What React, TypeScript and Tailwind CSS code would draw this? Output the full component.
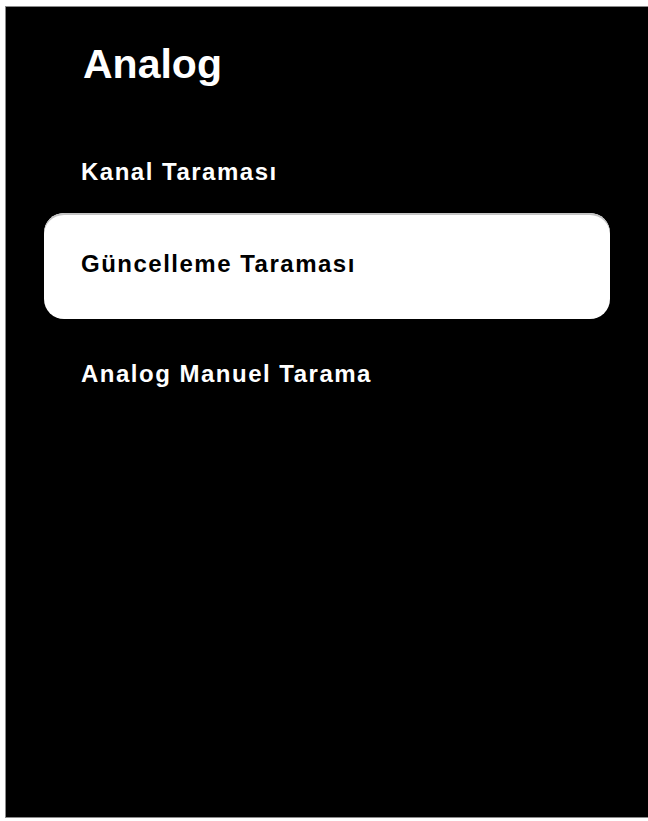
import React from "react";

export default function App() {
  return (
    <div className="w-[648px] h-[821px] bg-white pl-[5px] pt-[6px] pb-[3px] font-['Liberation_Sans',Arial,sans-serif]">
      <div className="h-full bg-black border-l border-t border-b border-[#8a8a8a] flex flex-col">
        <div className="mt-[37px] pl-[77px] text-[41px] leading-[41px] font-bold text-white">
          Analog
        </div>
        <div className="mt-[75px] pl-[75px] text-[24px] leading-[24px] font-bold text-white tracking-[1.5px]">
          Kanal Taraması
        </div>
        <div className="mt-[29px] mx-[38px] h-[106px] rounded-[20px] bg-white shadow-[inset_0_2px_0_#c4c4c4] pt-[39px] pl-[37px]">
          <div className="text-[24px] leading-[24px] font-bold text-black tracking-[1.5px]">
            Güncelleme Taraması
          </div>
        </div>
        <div className="mt-[43px] pl-[75px] text-[24px] leading-[24px] font-bold text-white tracking-[1.5px]">
          Analog Manuel Tarama
        </div>
      </div>
    </div>
  );
}
